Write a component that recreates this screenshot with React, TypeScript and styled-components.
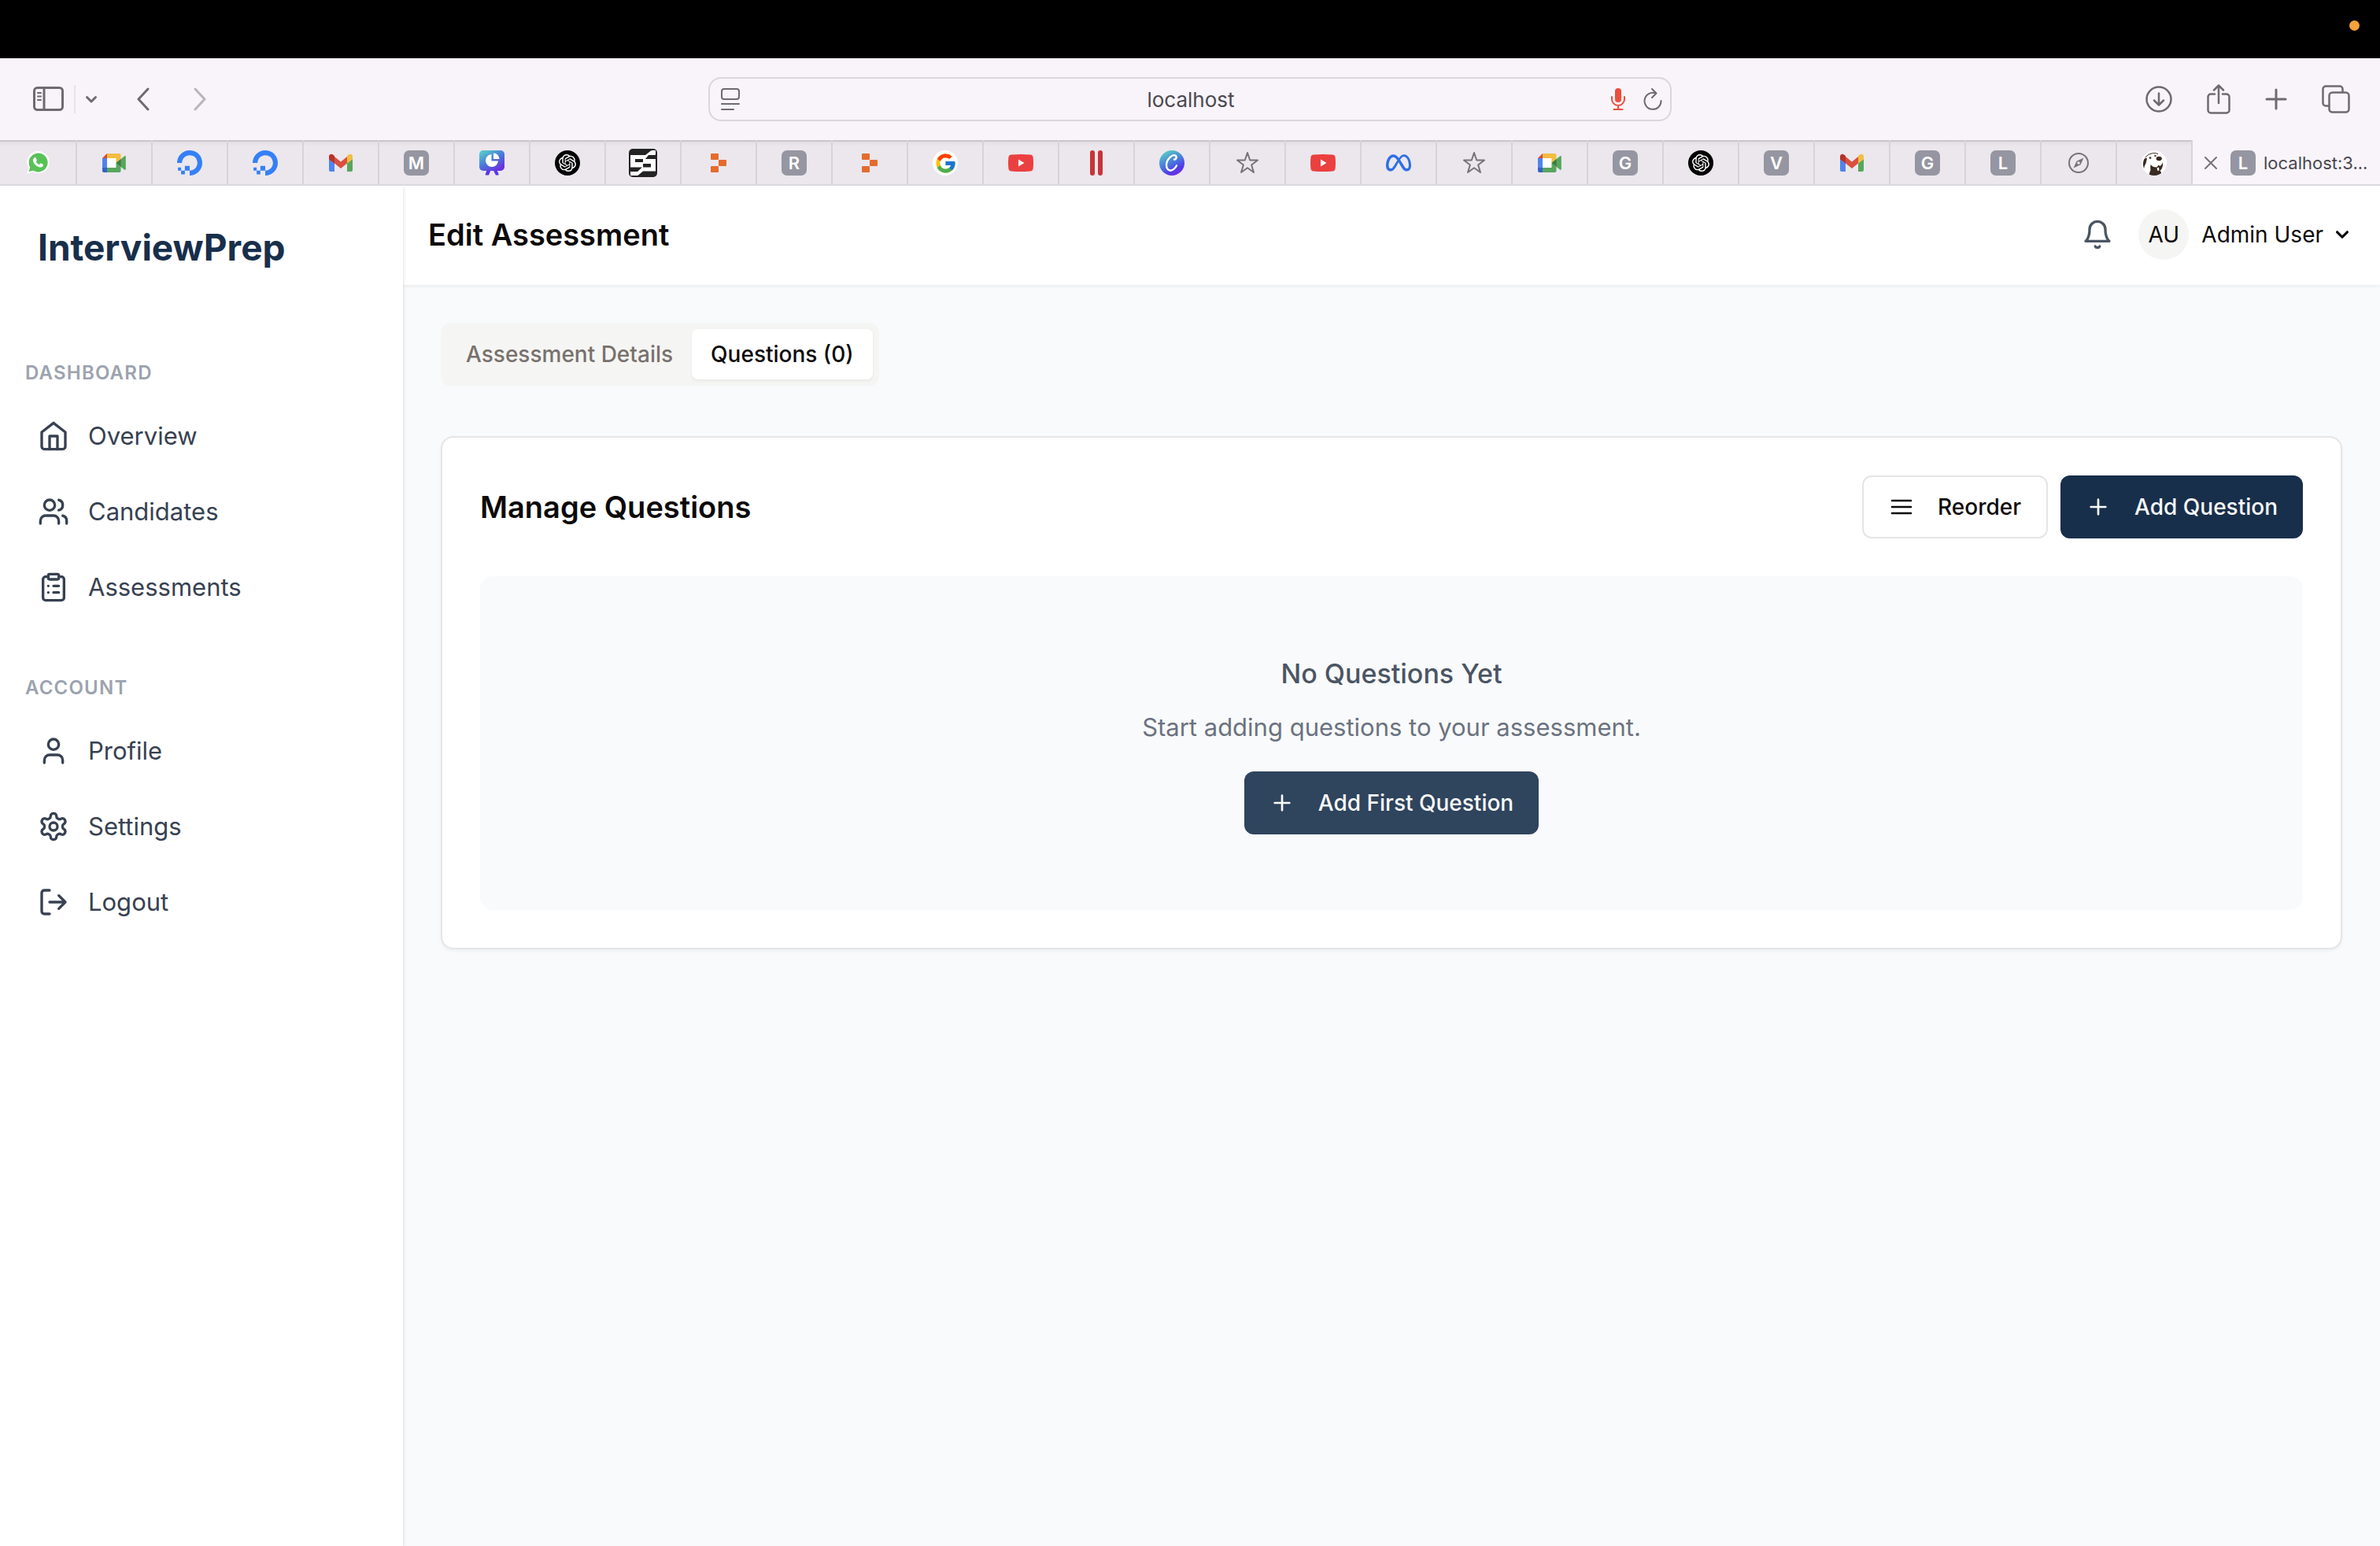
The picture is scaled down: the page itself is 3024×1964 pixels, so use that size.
import React from 'react';
import styled, { createGlobalStyle, css } from 'styled-components';
import { SiOpenai, SiDigitalocean } from 'react-icons/si';
import { FaMeta } from 'react-icons/fa6';
import { FcGoogle } from 'react-icons/fc';

const GlobalStyle = createGlobalStyle`
  *, *::before, *::after { box-sizing: border-box; }
  html, body { margin: 0; padding: 0; }
  body {
    font-family: Inter, "Liberation Sans", Arial, sans-serif;
    color: #0c0a09;
    background: #f9fafc;
    -webkit-font-smoothing: antialiased;
  }
  button, input { font: inherit; color: inherit; }
  svg { display: block; flex: none; }
`;

/* ---------- window chrome ---------- */

const Screen = styled.div`
  display: flex;
  flex-direction: column;
  min-height: 100vh;
`;

const CameraBar = styled.div`
  display: flex;
  justify-content: flex-end;
  align-items: center;
  height: 74px;
  padding: 0 26px 10px 0;
  background: #000;
`;

const RecordingDot = styled.span`
  width: 13px;
  height: 13px;
  border-radius: 50%;
  background: #f5a23c;
`;

const Toolbar = styled.div`
  display: grid;
  grid-template-columns: 1fr minmax(0, 1224px) 1fr;
  align-items: center;
  height: 104px;
  background: #f8f4fa;
  color: #6f6a72;
`;

const ToolGroup = styled.div<{ $end?: boolean }>`
  display: flex;
  align-items: center;
  justify-content: ${(p) => (p.$end ? 'flex-end' : 'flex-start')};
  gap: ${(p) => (p.$end ? '44px' : '12px')};
  padding: ${(p) => (p.$end ? '0 38px 0 0' : '0 0 0 42px')};
`;

const HistoryGroup = styled.div`
  display: flex;
  gap: 56px;
  margin-left: 38px;
`;

const IconButton = styled.button<{ $faded?: boolean }>`
  display: flex;
  padding: 0;
  border: 0;
  background: none;
  color: inherit;
  opacity: ${(p) => (p.$faded ? 0.45 : 1)};
`;

const ToolDivider = styled.span`
  width: 2px;
  height: 36px;
  background: #e6e3e9;
`;

const AddressBar = styled.form`
  display: flex;
  align-items: center;
  gap: 22px;
  height: 56px;
  padding: 0 10px 0 14px;
  border: 2px solid #d9d6dc;
  border-radius: 16px;
`;

const AddressInput = styled.input`
  flex: 1;
  min-width: 0;
  padding: 2px 0 0 40px;
  border: 0;
  outline: 0;
  background: none;
  font-size: 26px;
  line-height: 32px;
  text-align: center;
  color: #4c484e;
`;

const TabStrip = styled.div`
  position: relative;
  z-index: 3;
  display: flex;
  height: 56px;
  background: #ebe7ed;
  box-shadow: 0 2px 0 #dcd9de;
`;

const PinnedTab = styled.button`
  flex: 1 1 96px;
  display: flex;
  align-items: center;
  justify-content: center;
  min-width: 0;
  padding: 2px 0 0;
  border: 0;
  border-right: 2px solid #d7d3d9;
  background: linear-gradient(#c9c5cb, #c9c5cb 2px, #e3dfe5 2px, #ebe7ed 8px);

  &:first-child {
    flex-basis: 98px;
  }
`;

const ActiveTab = styled.div`
  flex: none;
  display: flex;
  align-items: center;
  width: 238px;
  padding: 2px 0 0 15px;
  background: #f8f4fa;
  color: #4a464d;
  font-size: 22px;
  line-height: 32px;
`;

const TabTitle = styled.span`
  margin-left: 10px;
  white-space: nowrap;
`;

const CloseButton = styled(IconButton)`
  margin-right: 17px;
  color: #77727a;
`;

const LetterBadge = styled.span`
  flex: none;
  display: flex;
  align-items: center;
  justify-content: center;
  width: 32px;
  height: 32px;
  border-radius: 7px;
  background: #9596a1;
  color: #fff;
  font-size: 22px;
  font-weight: 600;
  line-height: 32px;
`;

const RoundBadge = styled.span<{ $bg: string; $fg: string }>`
  display: flex;
  align-items: center;
  justify-content: center;
  width: 32px;
  height: 32px;
  border-radius: 50%;
  overflow: hidden;
  background: ${(p) => p.$bg};
  color: ${(p) => p.$fg};
`;

/* ---------- application ---------- */

const AppShell = styled.div`
  flex: 1;
  display: flex;
`;

const Sidebar = styled.aside`
  position: relative;
  z-index: 2;
  flex: none;
  width: 512px;
  padding: 48px 32px;
  background: #fff;
  box-shadow: 0 2px 6px rgba(0, 0, 0, 0.1), 0 2px 4px rgba(0, 0, 0, 0.06);
`;

const Brand = styled.div`
  margin: 0 16px 112px;
  font-size: 46px;
  font-weight: 700;
  line-height: 64px;
  color: #182f4b;
`;

const NavSection = styled.nav`
  margin-bottom: 72px;
`;

const NavHeading = styled.h2`
  margin: 0 0 24px;
  font-size: 24px;
  font-weight: 600;
  line-height: 32px;
  letter-spacing: 0.05em;
  text-transform: uppercase;
  color: #9ca3af;
`;

const NavList = styled.ul`
  display: flex;
  flex-direction: column;
  gap: 16px;
  margin: 0;
  padding: 0;
  list-style: none;
`;

const NavLink = styled.a`
  display: flex;
  align-items: center;
  gap: 24px;
  padding: 16px;
  border-radius: 12px;
  font-size: 31px;
  line-height: 48px;
  color: #374151;
  text-decoration: none;
`;

const Main = styled.div`
  flex: 1;
  min-width: 0;
`;

const Header = styled.header`
  position: relative;
  z-index: 1;
  display: flex;
  align-items: center;
  justify-content: space-between;
  height: 128px;
  padding: 0 32px;
  background: #fff;
  box-shadow: 0 2px 4px rgba(0, 0, 0, 0.06);
`;

const PageTitle = styled.h1`
  margin: 0;
  font-size: 38px;
  font-weight: 600;
  line-height: 56px;
`;

const HeaderActions = styled.div`
  display: flex;
  align-items: center;
  gap: 32px;
  color: #4b5563;
`;

const UserMenu = styled.button`
  display: flex;
  align-items: center;
  gap: 8px;
  padding: 0;
  border: 0;
  background: none;
  font-size: 28px;
  line-height: 40px;
  color: #0c0a09;
`;

const Avatar = styled.span`
  width: 64px;
  height: 64px;
  margin-right: 8px;
  border-radius: 50%;
  background: #f5f5f4;
  line-height: 64px;
  text-align: center;
`;

const Content = styled.main`
  display: flex;
  flex-direction: column;
  align-items: flex-start;
  gap: 64px;
  padding: 48px;
`;

const TabList = styled.div`
  display: flex;
  padding: 8px;
  border-radius: 12px;
  background: #f5f5f4;
`;

const TabButton = styled.button<{ $active?: boolean }>`
  padding: 12px 24px;
  border: 0;
  border-radius: 8px;
  background: none;
  font-size: 28px;
  font-weight: 500;
  line-height: 40px;
  color: #78716c;
  ${(p) =>
    p.$active &&
    css`
      background: #fff;
      color: #0c0a09;
      box-shadow: 0 2px 4px rgba(0, 0, 0, 0.06);
    `}
`;

const Card = styled.section`
  align-self: stretch;
  padding: 48px;
  border: 2px solid #e5e5e5;
  border-radius: 16px;
  background: #fff;
  box-shadow: 0 2px 4px rgba(0, 0, 0, 0.05);
`;

const CardHeader = styled.div`
  display: flex;
  align-items: center;
  justify-content: space-between;
  margin-bottom: 48px;
`;

const CardTitle = styled.h2`
  margin: 0;
  font-size: 38px;
  font-weight: 600;
  line-height: 56px;
`;

const ButtonRow = styled.div`
  display: flex;
  gap: 16px;
`;

const Button = styled.button<{ $tone: 'outline' | 'primary' | 'hover' }>`
  display: flex;
  align-items: center;
  gap: 30px;
  height: 80px;
  padding: 0 32px;
  border: 0;
  border-radius: 12px;
  font-size: 28px;
  font-weight: 500;
  line-height: 40px;
  color: #fafaf9;
  ${(p) =>
    p.$tone === 'outline' &&
    css`
      border: 2px solid #e5e5e5;
      background: #fff;
      color: #0c0a09;
    `}
  ${(p) =>
    p.$tone === 'primary' &&
    css`
      background: #182f4b;
    `}
  ${(p) =>
    p.$tone === 'hover' &&
    css`
      background: #2f445d;
    `}
`;

const EmptyState = styled.div`
  display: flex;
  flex-direction: column;
  align-items: center;
  padding: 96px 48px;
  border-radius: 16px;
  background: #f9fafb;
`;

const EmptyTitle = styled.h3`
  margin: 0 0 16px;
  font-size: 34px;
  font-weight: 500;
  line-height: 56px;
  color: #4b5563;
`;

const EmptyText = styled.p`
  margin: 0 0 32px;
  font-size: 31px;
  line-height: 48px;
  color: #6b7280;
`;

/* ---------- drawings ---------- */

type LineIconProps = { size: number; children: React.ReactNode; weight?: number };

const LineIcon = ({ size, children, weight = 2 }: LineIconProps) => (
  <svg
    width={size}
    height={size}
    viewBox="0 0 24 24"
    fill="none"
    stroke="currentColor"
    strokeWidth={weight}
    strokeLinecap="round"
    strokeLinejoin="round"
    aria-hidden="true"
  >
    {children}
  </svg>
);

const HomeIcon = () => (
  <LineIcon size={40}>
    <path d="m3 9 9-7 9 7v11a2 2 0 0 1-2 2H5a2 2 0 0 1-2-2z" />
    <path d="M9 22V12h6v10" />
  </LineIcon>
);

const UsersIcon = () => (
  <LineIcon size={40}>
    <path d="M16 21v-2a4 4 0 0 0-4-4H6a4 4 0 0 0-4 4v2" />
    <circle cx="9" cy="7" r="4" />
    <path d="M22 21v-2a4 4 0 0 0-3-3.87" />
    <path d="M16 3.13a4 4 0 0 1 0 7.75" />
  </LineIcon>
);

const ClipboardIcon = () => (
  <LineIcon size={40}>
    <rect width="8" height="4" x="8" y="2" rx="1" />
    <path d="M16 4h2a2 2 0 0 1 2 2v14a2 2 0 0 1-2 2H6a2 2 0 0 1-2-2V6a2 2 0 0 1 2-2h2" />
    <path d="M12 11h4M12 16h4M8 11h.01M8 16h.01" />
  </LineIcon>
);

const UserIcon = () => (
  <LineIcon size={40}>
    <path d="M19 21v-2a4 4 0 0 0-4-4H9a4 4 0 0 0-4 4v2" />
    <circle cx="12" cy="7" r="4" />
  </LineIcon>
);

const GearIcon = () => (
  <LineIcon size={40}>
    <path d="M12.22 2h-.44a2 2 0 0 0-2 2v.18a2 2 0 0 1-1 1.73l-.43.25a2 2 0 0 1-2 0l-.15-.08a2 2 0 0 0-2.73.73l-.22.38a2 2 0 0 0 .73 2.73l.15.1a2 2 0 0 1 1 1.72v.51a2 2 0 0 1-1 1.74l-.15.09a2 2 0 0 0-.73 2.73l.22.38a2 2 0 0 0 2.73.73l.15-.08a2 2 0 0 1 2 0l.43.25a2 2 0 0 1 1 1.73V20a2 2 0 0 0 2 2h.44a2 2 0 0 0 2-2v-.18a2 2 0 0 1 1-1.73l.43-.25a2 2 0 0 1 2 0l.15.08a2 2 0 0 0 2.73-.73l.22-.39a2 2 0 0 0-.73-2.73l-.15-.08a2 2 0 0 1-1-1.74v-.5a2 2 0 0 1 1-1.74l.15-.09a2 2 0 0 0 .73-2.73l-.22-.38a2 2 0 0 0-2.73-.73l-.15.08a2 2 0 0 1-2 0l-.43-.25a2 2 0 0 1-1-1.73V4a2 2 0 0 0-2-2z" />
    <circle cx="12" cy="12" r="3" />
  </LineIcon>
);

const LogoutIcon = () => (
  <LineIcon size={40}>
    <path d="M9 21H5a2 2 0 0 1-2-2V5a2 2 0 0 1 2-2h4" />
    <path d="m16 17 5-5-5-5M21 12H9" />
  </LineIcon>
);

const BellIcon = () => (
  <LineIcon size={40}>
    <path d="M6 8a6 6 0 0 1 12 0c0 7 3 9 3 9H3s3-2 3-9" />
    <path d="M10.3 21a1.94 1.94 0 0 0 3.4 0" />
  </LineIcon>
);

const PlusIcon = () => (
  <LineIcon size={32}>
    <path d="M5 12h14M12 5v14" />
  </LineIcon>
);

const LinesIcon = () => (
  <LineIcon size={32}>
    <path d="M3 6h18M3 12h18M3 18h18" />
  </LineIcon>
);

const CaretIcon = () => (
  <svg width="32" height="32" viewBox="0 0 20 20" fill="currentColor" aria-hidden="true">
    <path
      fillRule="evenodd"
      d="M5.293 7.293a1 1 0 011.414 0L10 10.586l3.293-3.293a1 1 0 111.414 1.414l-4 4a1 1 0 01-1.414 0l-4-4a1 1 0 010-1.414z"
    />
  </svg>
);

type StrokeProps = { w: number; h: number; sw?: number; children: React.ReactNode };

const Stroke = ({ w, h, sw = 2.5, children }: StrokeProps) => (
  <svg
    width={w}
    height={h}
    viewBox={`0 0 ${w} ${h}`}
    fill="none"
    stroke="currentColor"
    strokeWidth={sw}
    strokeLinecap="round"
    strokeLinejoin="round"
    aria-hidden="true"
  >
    {children}
  </svg>
);

const WhatsAppIcon = () => (
  <svg width="30" height="30" viewBox="0 0 30 30" aria-hidden="true">
    <path d="M16 0a14 14 0 1 1-7 26.200L1 29l2.500-7.500A14 14 0 0 1 16 0z" fill="#fff" />
    <path d="M15.500 2.500a12 12 0 1 1-6 22.300L3.500 26l1.700-5.500A12 12 0 0 1 15.500 2.500z" fill="#59c257" />
    <path
      d="M11.500 8c.7 0 1 .3 1.300 1l.9 2.200c.2.500 0 .9-.9 2 .8 1.700 2.300 3 4.200 3.900 1.200-1.500 1.500-1.700 2-1.500l2.500 1.200c.6.300.6.700.4 1.500-.5 1.900-2.700 2.600-4.400 2.200-4.200-1-8-4.700-8.500-8.300C8.800 10 10.300 8 11.500 8z"
      fill="#fff"
    />
  </svg>
);

const MeetIcon = () => (
  <svg width="30" height="24" viewBox="0 0 30 24" aria-hidden="true">
    <path d="M6 6h12v12H6z" fill="#fff" />
    <path d="M0 6l6-6v6z" fill="#d8473a" />
    <path d="M6 0h15.500A2 2 0 0 1 23.500 2v5l-6 5V6H6z" fill="#f3bd42" />
    <path d="M0 6h6v12H0z" fill="#5084ed" />
    <path d="M0 18h6v6H2a2 2 0 0 1-2-2z" fill="#3263c9" />
    <path d="M6 18h11.500v-6l6 5v5a2 2 0 0 1-2 2H6z" fill="#58a65c" />
    <path d="M17.500 12 28 3.400c.8-.6 1.800-.2 1.800.8v15.600c0 1-1 1.400-1.800.8z" fill="#58a65c" />
    <path d="M17.500 12l6-5v10z" fill="#3a7d40" />
  </svg>
);

const GmailIcon = () => (
  <svg width="30" height="24" viewBox="0 0 30 24" aria-hidden="true">
    <path d="M0 7l7 5v11H2a2 2 0 0 1-2-2z" fill="#5084ed" />
    <path d="M30 7l-7 5v11h5a2 2 0 0 0 2-2z" fill="#58a65c" />
    <path d="M7 4l8 6.500L23 4v8.500l-8 6.500-8-6.500z" fill="#d9503f" />
    <path d="M0 4a3 3 0 0 1 5-2.500L7 3v9.500L0 7.500z" fill="#b5332a" />
    <path d="M30 4a3 3 0 0 0-5-2.500L23 3v9.500l7-5z" fill="#f3bd42" />
  </svg>
);

const SlidesIcon = () => (
  <svg width="32" height="32" viewBox="0 0 32 32" aria-hidden="true">
    <defs>
      <linearGradient id="slides" x1="0" y1="0" x2="0.7" y2="1">
        <stop offset="0.150" stopColor="#54c2c9" />
        <stop offset="0.550" stopColor="#4a78dc" />
        <stop offset="1" stopColor="#6a31dc" />
      </linearGradient>
    </defs>
    <path d="M10 24h5l-3 7.500H8.500c-1 0-1-.8-.6-1.500zM17 24h5l2.500 6c.4.900 0 1.500-.8 1.500H21z" fill="#5a35e6" />
    <rect width="32" height="26" rx="5" fill="url(#slides)" />
    <path d="M15.500 5v8.500H24A8 8 0 1 1 15.500 5z" fill="#fff" />
    <path d="M18 3.500a7.500 7.500 0 0 1 7.500 7.500H18z" fill="#fff" />
  </svg>
);

const DoubleSIcon = () => (
  <svg width="36" height="36" viewBox="0 0 36 36" aria-hidden="true">
    <rect width="36" height="36" rx="5" fill="#232323" />
    <path
      d="M2 8h19l7-5.500q1-.5 2-.5h4v5q0 1-1 1h-8l-4 5H8v4h10v6.500H2zM34 13v15.500H18l-6 5q-1 .5-2 .5H2v-5h9l6-5.500h11V19H18v-6z"
      fill="#fff"
    />
  </svg>
);

const BlocksIcon = () => (
  <svg width="20" height="24" viewBox="0 0 20 24" fill="#e36c2d" aria-hidden="true">
    <rect width="10" height="8" rx="1" />
    <rect x="10" y="8" width="10" height="8" rx="1" />
    <rect y="16" width="10" height="8" rx="1" />
  </svg>
);

const YouTubeIcon = () => (
  <svg width="32" height="22" viewBox="0 0 32 22" aria-hidden="true">
    <path d="M4 .6Q16-.6 28 .6q3.300.3 3.600 3.500.8 7 0 13.800-.3 3.200-3.600 3.500-12 1.200-24 0Q.7 21.100.4 17.900q-.8-7 0-13.800Q.7.9 4 .6z" fill="#eb4040" />
    <path d="M13 6.500v9l7.500-4.500z" fill="#fff" />
  </svg>
);

const BarsIcon = () => (
  <svg width="16" height="32" viewBox="0 0 16 32" fill="#c93438" aria-hidden="true">
    <rect width="6" height="32" rx="3" />
    <rect x="10" width="6" height="32" rx="3" />
  </svg>
);

const ScriptCIcon = () => (
  <svg width="32" height="32" viewBox="0 0 32 32" aria-hidden="true">
    <defs>
      <linearGradient id="script" x1="0.2" y1="0" x2="0.7" y2="1">
        <stop offset="0.100" stopColor="#54c2c9" />
        <stop offset="0.500" stopColor="#4a78dc" />
        <stop offset="0.800" stopColor="#5138ea" />
        <stop offset="1" stopColor="#7a2fd8" />
      </linearGradient>
    </defs>
    <circle cx="16" cy="16" r="16" fill="url(#script)" />
    <path
      d="M19 11.500c2 .5 3.800-3 1.600-4.800C17.500 4.500 9.500 10 9 18.500c-.2 5 3 7.800 6.500 6.800 2.800-.8 5-3 6.500-6"
      fill="none"
      stroke="#fff"
      strokeWidth="2.400"
      strokeLinecap="round"
    />
  </svg>
);

const StarIcon = () => (
  <svg width="30" height="30" viewBox="0 0 30 30" fill="none" stroke="#77727a" strokeWidth="2" strokeLinejoin="round" aria-hidden="true">
    <path d="M15 2l3.200 9.500h9.800l-7.900 6L23 27l-8-5.800L7 27l2.900-9.500-7.900-6h9.800z" />
  </svg>
);

const CompassIcon = () => (
  <svg width="28" height="28" viewBox="0 0 28 28" fill="none" aria-hidden="true">
    <circle cx="14" cy="14" r="12" stroke="#77727a" strokeWidth="2" />
    <path fillRule="evenodd" d="M20.500 7.500l-4 8.800L7.500 20.500l4-8.800zM14 12.200a1.800 1.800 0 1 0 0 3.600 1.800 1.800 0 0 0 0-3.600z" fill="#77727a" />
  </svg>
);

const BeaverIcon = () => (
  <svg width="32" height="32" viewBox="0 0 32 32" aria-hidden="true">
    <defs>
      <clipPath id="beaver">
        <circle cx="16" cy="16" r="16" />
      </clipPath>
    </defs>
    <circle cx="16" cy="16" r="16" fill="#fff" />
    <g clipPath="url(#beaver)" fill="#382923">
      <path d="M3 11.500q2-2.500 4-1.500-.5 3-1.500 6.500-1.500 2-2.500 6.500-2-5 0-11.500z" />
      <path d="M4.500 9Q9 4 14.500 3.500q4-.3 6.500 1.200" fill="none" stroke="#382923" strokeWidth="1" />
      <ellipse cx="11" cy="9.500" rx="1.400" ry="1.200" />
      <ellipse cx="17.500" cy="7" rx="1.300" ry="1" />
      <ellipse cx="22.200" cy="10.500" rx="3.600" ry="2.700" />
      <path d="M11.500 18q3 3.500 7 3.500 2-.5 3-3 1 1.500 2.500 1.200 2-1 2.500-5 1.500 4-.5 8-1 2-2.500 2.800Q26 29 25 32H9.500q.5-4 2-7-.5-3.500 0-7z" />
      <path d="M19.500 22.500l2.500-1 .5 4-2 .5z" fill="#fff" />
    </g>
  </svg>
);

const Tint = styled.span<{ $color: string }>`
  color: ${(p) => p.$color};
`;

const MetaIcon = () => (
  <Tint $color="#2f6fe4">
    <FaMeta size={32} />
  </Tint>
);

const OceanIcon = () => (
  <Tint $color="#3580f7">
    <SiDigitalocean size={32} />
  </Tint>
);

const ChatIcon = () => (
  <RoundBadge $bg="#000" $fg="#fff">
    <SiOpenai size={22} />
  </RoundBadge>
);

const GoogleIcon = () => (
  <RoundBadge $bg="#fff" $fg="#000">
    <FcGoogle size={29} />
  </RoundBadge>
);

/* ---------- data ---------- */

const pinnedTabs: { name: string; icon: React.ReactNode }[] = [
  { name: 'WhatsApp', icon: <WhatsAppIcon /> },
  { name: 'Meet', icon: <MeetIcon /> },
  { name: 'DigitalOcean', icon: <OceanIcon /> },
  { name: 'DigitalOcean', icon: <OceanIcon /> },
  { name: 'Gmail', icon: <GmailIcon /> },
  { name: 'M', icon: <LetterBadge>M</LetterBadge> },
  { name: 'Slides', icon: <SlidesIcon /> },
  { name: 'ChatGPT', icon: <ChatIcon /> },
  { name: 'S', icon: <DoubleSIcon /> },
  { name: 'Blocks', icon: <BlocksIcon /> },
  { name: 'R', icon: <LetterBadge>R</LetterBadge> },
  { name: 'Blocks', icon: <BlocksIcon /> },
  { name: 'Google', icon: <GoogleIcon /> },
  { name: 'YouTube', icon: <YouTubeIcon /> },
  { name: 'Bars', icon: <BarsIcon /> },
  { name: 'Canva', icon: <ScriptCIcon /> },
  { name: 'Favourites', icon: <StarIcon /> },
  { name: 'YouTube', icon: <YouTubeIcon /> },
  { name: 'Meta', icon: <MetaIcon /> },
  { name: 'Favourites', icon: <StarIcon /> },
  { name: 'Meet', icon: <MeetIcon /> },
  { name: 'G', icon: <LetterBadge>G</LetterBadge> },
  { name: 'ChatGPT', icon: <ChatIcon /> },
  { name: 'V', icon: <LetterBadge>V</LetterBadge> },
  { name: 'Gmail', icon: <GmailIcon /> },
  { name: 'G', icon: <LetterBadge>G</LetterBadge> },
  { name: 'L', icon: <LetterBadge>L</LetterBadge> },
  { name: 'Compass', icon: <CompassIcon /> },
  { name: 'DBeaver', icon: <BeaverIcon /> },
];

const navSections = [
  {
    title: 'Dashboard',
    items: [
      { label: 'Overview', icon: <HomeIcon /> },
      { label: 'Candidates', icon: <UsersIcon /> },
      { label: 'Assessments', icon: <ClipboardIcon /> },
    ],
  },
  {
    title: 'Account',
    items: [
      { label: 'Profile', icon: <UserIcon /> },
      { label: 'Settings', icon: <GearIcon /> },
      { label: 'Logout', icon: <LogoutIcon /> },
    ],
  },
];

/* ---------- page ---------- */

const BrowserToolbar = () => (
  <Toolbar>
    <ToolGroup>
      <IconButton aria-label="Show sidebar">
        <Stroke w={40} h={32} sw={3}>
          <rect x="1.500" y="1.500" width="36" height="28" rx="4" />
          <path d="M14 1.500v28" />
          <path d="M6 8h4M6 12.500h4M6 17h4" strokeWidth="2" />
        </Stroke>
      </IconButton>
      <ToolDivider />
      <IconButton aria-label="Tab groups">
        <Stroke w={16} h={16} sw={3}>
          <path d="M2.500 5.500L8 11l5.500-5.500" />
        </Stroke>
      </IconButton>
      <HistoryGroup>
        <IconButton aria-label="Back">
          <Stroke w={16} h={30} sw={3}>
            <path d="M14 2L2 15l12 13" />
          </Stroke>
        </IconButton>
        <IconButton aria-label="Forward" $faded>
          <Stroke w={16} h={30} sw={3}>
            <path d="M2 2l12 13L2 28" />
          </Stroke>
        </IconButton>
      </HistoryGroup>
    </ToolGroup>

    <AddressBar>
      <Stroke w={24} h={28} sw={2}>
        <rect x="1" y="1" width="22" height="13" rx="3" />
        <path d="M1 20h22M1 27h15" />
      </Stroke>
      <AddressInput aria-label="Address" defaultValue="localhost" />
      <svg width="20" height="28" viewBox="0 0 20 28" aria-hidden="true">
        <rect x="6" width="8" height="18" rx="4" fill="#ec4e3d" />
        <path d="M2 11v3a8 8 0 0 0 16 0v-3M10 22v4M4.500 27h11" fill="none" stroke="#ec4e3d" strokeWidth="2" strokeLinecap="round" />
      </svg>
      <IconButton type="button" aria-label="Reload">
        <Stroke w={24} h={28} sw={2}>
          <path d="M15 6.300A10.500 10.500 0 1 0 22.500 16" />
          <path d="M11 1l5.500 5.500L11 12" />
        </Stroke>
      </IconButton>
    </AddressBar>

    <ToolGroup $end>
      <IconButton aria-label="Downloads">
        <Stroke w={34} h={34} sw={2.5}>
          <circle cx="17" cy="17" r="15.500" />
          <path d="M17 9.500V24M11 18.500l6 6 6-6" />
        </Stroke>
      </IconButton>
      <IconButton aria-label="Share">
        <Stroke w={30} h={38} sw={2.5}>
          <path d="M10 12.500H5a3.500 3.500 0 0 0-3.500 3.500v17A3.500 3.500 0 0 0 5 36.500h20a3.500 3.500 0 0 0 3.500-3.500V16a3.500 3.500 0 0 0-3.500-3.500h-5" />
          <path d="M15 24V2M9 7.500l6-6 6 6" />
        </Stroke>
      </IconButton>
      <IconButton aria-label="New tab">
        <Stroke w={28} h={28} sw={3}>
          <path d="M14 2v24M2 14h24" />
        </Stroke>
      </IconButton>
      <IconButton aria-label="Tab overview">
        <Stroke w={36} h={36} sw={2.5}>
          <rect x="9.500" y="9.500" width="25" height="25" rx="4" />
          <path d="M9 26.500H5A3.500 3.500 0 0 1 1.500 23V5A3.500 3.500 0 0 1 5 1.500h18A3.500 3.500 0 0 1 26.500 5v4" />
        </Stroke>
      </IconButton>
    </ToolGroup>
  </Toolbar>
);

const BrowserTabs = () => (
  <TabStrip>
    {pinnedTabs.map((tab, i) => (
      <PinnedTab key={i} aria-label={tab.name}>
        {tab.icon}
      </PinnedTab>
    ))}
    <ActiveTab>
      <CloseButton aria-label="Close tab">
        <Stroke w={16} h={16} sw={2}>
          <path d="M1 1l14 14M15 1L1 15" />
        </Stroke>
      </CloseButton>
      <LetterBadge>L</LetterBadge>
      <TabTitle>localhost:3...</TabTitle>
    </ActiveTab>
  </TabStrip>
);

export default function App() {
  return (
    <Screen>
      <GlobalStyle />
      <CameraBar>
        <RecordingDot />
      </CameraBar>
      <BrowserToolbar />
      <BrowserTabs />
      <AppShell>
        <Sidebar>
          <Brand>InterviewPrep</Brand>
          {navSections.map((section) => (
            <NavSection key={section.title} aria-label={section.title}>
              <NavHeading>{section.title}</NavHeading>
              <NavList>
                {section.items.map((item) => (
                  <li key={item.label}>
                    <NavLink href="#">
                      {item.icon}
                      {item.label}
                    </NavLink>
                  </li>
                ))}
              </NavList>
            </NavSection>
          ))}
        </Sidebar>
        <Main>
          <Header>
            <PageTitle>Edit Assessment</PageTitle>
            <HeaderActions>
              <IconButton aria-label="Notifications">
                <BellIcon />
              </IconButton>
              <UserMenu>
                <Avatar>AU</Avatar>
                <span>Admin User</span>
                <CaretIcon />
              </UserMenu>
            </HeaderActions>
          </Header>
          <Content>
            <TabList role="tablist">
              <TabButton role="tab" aria-selected={false}>
                Assessment Details
              </TabButton>
              <TabButton role="tab" aria-selected $active>
                Questions (0)
              </TabButton>
            </TabList>
            <Card>
              <CardHeader>
                <CardTitle>Manage Questions</CardTitle>
                <ButtonRow>
                  <Button $tone="outline">
                    <LinesIcon />
                    Reorder
                  </Button>
                  <Button $tone="primary">
                    <PlusIcon />
                    Add Question
                  </Button>
                </ButtonRow>
              </CardHeader>
              <EmptyState>
                <EmptyTitle>No Questions Yet</EmptyTitle>
                <EmptyText>Start adding questions to your assessment.</EmptyText>
                <Button $tone="hover">
                  <PlusIcon />
                  Add First Question
                </Button>
              </EmptyState>
            </Card>
          </Content>
        </Main>
      </AppShell>
    </Screen>
  );
}
